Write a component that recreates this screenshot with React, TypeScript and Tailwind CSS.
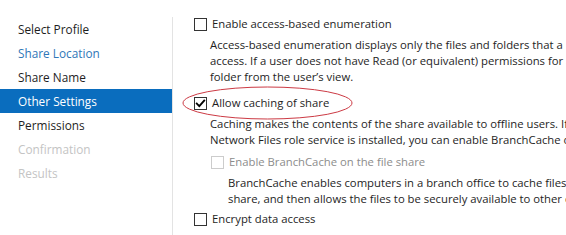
import React from "react";

const font = { fontFamily: '"Segoe UI", "Open Sans", "Noto Sans", sans-serif' };

function Box({ checked = false, disabled = false }: { checked?: boolean; disabled?: boolean }) {
  return (
    <span
      className={
        "flex h-[13px] w-[13px] shrink-0 items-center justify-center border bg-white " +
        (disabled ? "border-[#cccccc]" : "border-[#333333]")
      }
    >
      {checked && (
        <svg width="11" height="11" viewBox="0 0 11 11">
          <path d="M1.8 5.6 L4.3 8.1 L9.2 2.6" fill="none" stroke="#000" strokeWidth="1.9" strokeLinecap="square" />
        </svg>
      )}
    </span>
  );
}

export default function App() {
  const items: { t: string; c: string; active?: boolean }[] = [
    { t: "Select Profile", c: "text-[#1e1e1e]" },
    { t: "Share Location", c: "text-[#2f77b8]" },
    { t: "Share Name", c: "text-[#1e1e1e]" },
    { t: "Other Settings", c: "text-white", active: true },
    { t: "Permissions", c: "text-[#1e1e1e]" },
    { t: "Confirmation", c: "text-[#c4c4c4]" },
    { t: "Results", c: "text-[#c4c4c4]" },
  ];
  return (
    <div className="flex h-[235px] w-[566px] overflow-hidden bg-white text-[11.3px]" style={font}>
      <div className="mt-[17px] w-[173px] shrink-0 border-r border-[#e3e3e3]">
        {items.map((it) => (
          <div
            key={it.t}
            className={
              "flex h-[24px] items-center pl-[18px] text-[11.8px] leading-[24px] " +
              it.c +
              (it.active ? " bg-[#0a6dbe]" : "")
            }
          >
            {it.t}
          </div>
        ))}
      </div>
      <div className="flex min-w-0 flex-1 flex-col whitespace-nowrap pt-[16px] text-[#1e1e1e]">
        <div className="flex h-[16px] items-center gap-[5px] pl-[21px] leading-[16px]">
          <Box />
          <span>Enable access-based enumeration</span>
        </div>
        <div className="mt-[5px] pl-[37px] leading-[16px]">
          <div>Access-based enumeration displays only the files and folders that a user has permissions to</div>
          <div>access. If a user does not have Read (or equivalent) permissions for a folder, Windows hides the</div>
          <div>folder from the user’s view.</div>
        </div>
        <div className="relative mt-[10px] flex h-[16px] items-center gap-[5px] pl-[21px] leading-[16px]">
          <Box checked />
          <span>Allow caching of share</span>
          <svg className="pointer-events-none absolute left-[9px] top-[-9px]" width="172" height="34" viewBox="0 0 172 34">
            <ellipse cx="85.5" cy="17" rx="84.5" ry="16" fill="none" stroke="#cc3a44" strokeWidth="1" />
          </svg>
        </div>
        <div className="mt-[5px] pl-[37px] leading-[16px]">
          <div>Caching makes the contents of the share available to offline users. If the BranchCache for</div>
          <div>Network Files role service is installed, you can enable BranchCache on the share.</div>
        </div>
        <div className="mt-[6px] flex h-[16px] items-center gap-[5px] pl-[38px] leading-[16px] text-[#8c8c8c]">
          <Box disabled />
          <span>Enable BranchCache on the file share</span>
        </div>
        <div className="mt-[5px] pl-[55px] leading-[16px]">
          <div>BranchCache enables computers in a branch office to cache files downloaded from this</div>
          <div>share, and then allows the files to be securely available to other computers in the branch.</div>
        </div>
        <div className="mt-[4px] flex h-[16px] items-center gap-[5px] pl-[21px] leading-[16px]">
          <Box />
          <span>Encrypt data access</span>
        </div>
      </div>
    </div>
  );
}
